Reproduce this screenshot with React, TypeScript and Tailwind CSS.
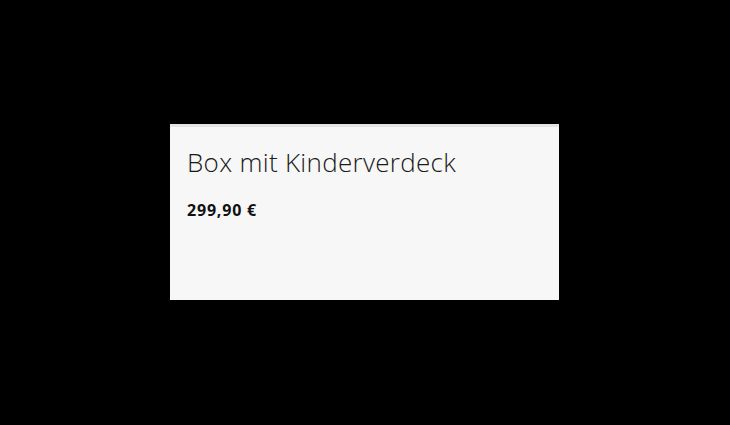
export default function App() {
  return (
    <div className="flex h-[425px] w-[730px] items-start justify-center bg-black">
      <div className="mr-[1px] mt-[124px] h-[176px] w-[389px] border-t-[3px] border-[#e4e4e4] bg-[#f7f7f7] px-[17px] pt-[17px] font-['Open_Sans',sans-serif]">
        <h2 className="text-[26px] font-light leading-[36px] tracking-[0.3px] text-[#1a1a1a]">Box mit Kinderverdeck</h2>
        <p className="mt-[18px] text-[16px] font-bold tracking-[0.8px] text-[#111]">299,90 €</p>
      </div>
    </div>
  );
}
